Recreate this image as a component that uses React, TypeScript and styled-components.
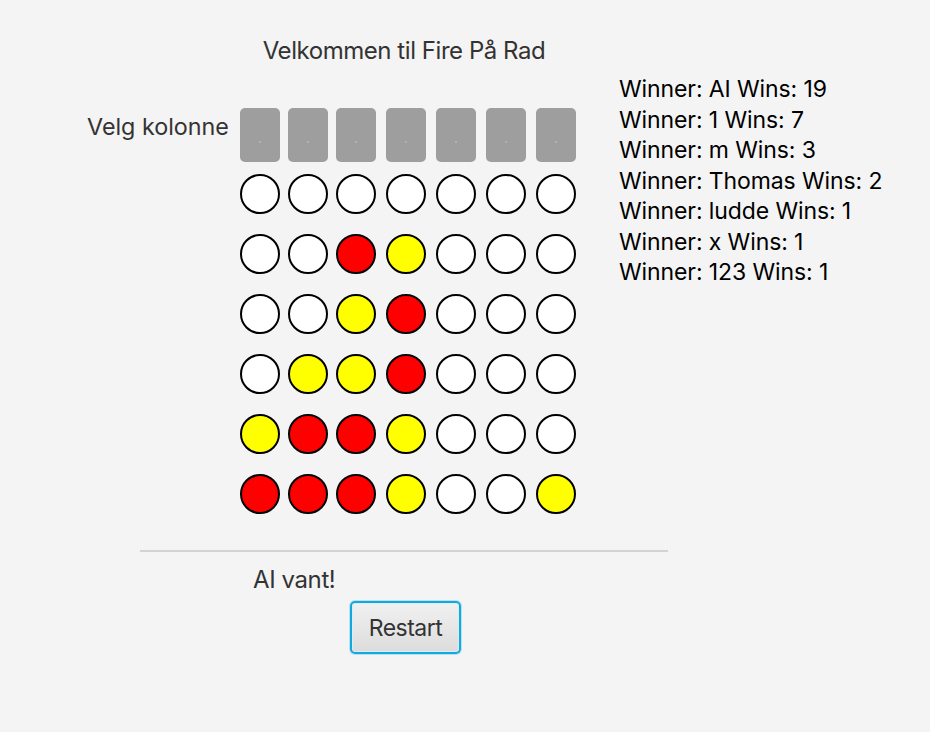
import React from "react";
import styled, { createGlobalStyle } from "styled-components";

type Cell = "" | "R" | "Y";

const GlobalStyle = createGlobalStyle`
    html, body {
        margin: 0;
        padding: 0;
        background: #f4f4f4;
    }
    body {
        font-family: Inter, "Noto Sans", sans-serif;
        color: #333333;
    }
`

const board: Cell[][] = [
    ["", "", "", "", "", "", ""],
    ["", "", "R", "Y", "", "", ""],
    ["", "", "Y", "R", "", "", ""],
    ["", "Y", "Y", "R", "", "", ""],
    ["Y", "R", "R", "Y", "", "", ""],
    ["R", "R", "R", "Y", "", "", "Y"],
];

const winners = [
    { name: "AI", wins: 19 },
    { name: "1", wins: 7 },
    { name: "m", wins: 3 },
    { name: "Thomas", wins: 2 },
    { name: "ludde", wins: 1 },
    { name: "x", wins: 1 },
    { name: "123", wins: 1 },
];

const Page = styled.div`
    width: 930px;
    height: 732px;
    display: grid;
    grid-template-columns: 619px 1fr;
    grid-template-rows: auto auto auto auto auto;
    align-content: start;
    padding-top: 36px;
    box-sizing: border-box;
`

const Title = styled.h1`
    grid-column: 1;
    grid-row: 1;
    margin: 0 0 0 140px;
    width: 528px;
    text-align: center;
    font-size: 24px;
    font-weight: 400;
    line-height: 29px;
    letter-spacing: -0.45px;
    color: #333333;
`

const BoardRow = styled.div`
    grid-column: 1;
    grid-row: 2;
    display: flex;
    align-items: flex-start;
    padding-left: 87px;
    margin-top: 43px;
`

const PickLabel = styled.div`
    width: 141px;
    margin-right: 12px;
    font-size: 23.3px;
    line-height: 38px;
    white-space: nowrap;
    color: #333333;
`

const Grid = styled.div`
    display: grid;
    grid-template-columns: 48px 48px 50px 50px 50px 50px 40px;
    grid-template-rows: 66px;
    grid-auto-rows: 60px;
`

const ColumnButton = styled.button`
    width: 40px;
    height: 54px;
    padding: 0;
    border: none;
    border-radius: 5px;
    background: #9e9e9e;
    display: flex;
    justify-content: center;
    align-items: center;
`

const Dot = styled.span`
    width: 2px;
    height: 2px;
    margin-top: 13px;
    border-radius: 50%;
    background: #b8b8b8;
`

const colorFor = (c: Cell) => (c === "R" ? "#ff0000" : c === "Y" ? "#ffff00" : "#ffffff");

const Disc = styled.div<{ $cell: Cell }>`
    width: 40px;
    height: 40px;
    box-sizing: border-box;
    border: 2px solid #000000;
    border-radius: 50%;
    background: ${(p) => colorFor(p.$cell)};
`

const Separator = styled.div`
    grid-column: 1 / 3;
    grid-row: 3;
    margin: 16px 0 0 140px;
    width: 528px;
    height: 2px;
    background: #d3d3d3;
`

const Status = styled.div`
    grid-column: 1;
    grid-row: 4;
    margin: 13px 0 0 253px;
    font-size: 24px;
    line-height: 29px;
    letter-spacing: -0.4px;
    color: #333333;
`

const RestartWrap = styled.div`
    grid-column: 1;
    grid-row: 5;
    margin: 7px 0 0 350px;
`

const RestartButton = styled.button`
    width: 111px;
    height: 53px;
    box-sizing: border-box;
    border: 2px solid #12a9dd;
    border-radius: 5px;
    box-shadow: 0 0 0 1px rgba(18, 169, 221, 0.25), inset 0 0 0 1px #dcecf2;
    background: linear-gradient(#f1f1f1, #dcdcdc);
    font-family: Inter, "Noto Sans", sans-serif;
    font-size: 23px;
    letter-spacing: -0.5px;
    color: #333333;
    padding: 0;
`

const WinnerList = styled.ul`
    grid-column: 2;
    grid-row: 1 / 3;
    list-style: none;
    margin: 38px 0 0 0;
    padding: 0;
`

const WinnerItem = styled.li`
    font-size: 23px;
    line-height: 30.5px;
    letter-spacing: -0.1px;
    color: #000000;
    white-space: nowrap;
`

export default function App() {
    return (
        <>
            <GlobalStyle />
            <Page>
                <Title>Velkommen til Fire På Rad</Title>
                <BoardRow>
                    <PickLabel>Velg kolonne</PickLabel>
                    <Grid>
                        {board[0].map((_, i) => (
                            <ColumnButton key={`b${i}`}>
                                <Dot />
                            </ColumnButton>
                        ))}
                        {board.map((row, r) =>
                            row.map((cell, c) => <Disc key={`${r}-${c}`} $cell={cell} />)
                        )}
                    </Grid>
                </BoardRow>
                <Separator />
                <Status>AI vant!</Status>
                <RestartWrap>
                    <RestartButton>Restart</RestartButton>
                </RestartWrap>
                <WinnerList>
                    {winners.map((w) => (
                        <WinnerItem key={w.name}>
                            Winner: {w.name} Wins: {w.wins}
                        </WinnerItem>
                    ))}
                </WinnerList>
            </Page>
        </>
    )
}
